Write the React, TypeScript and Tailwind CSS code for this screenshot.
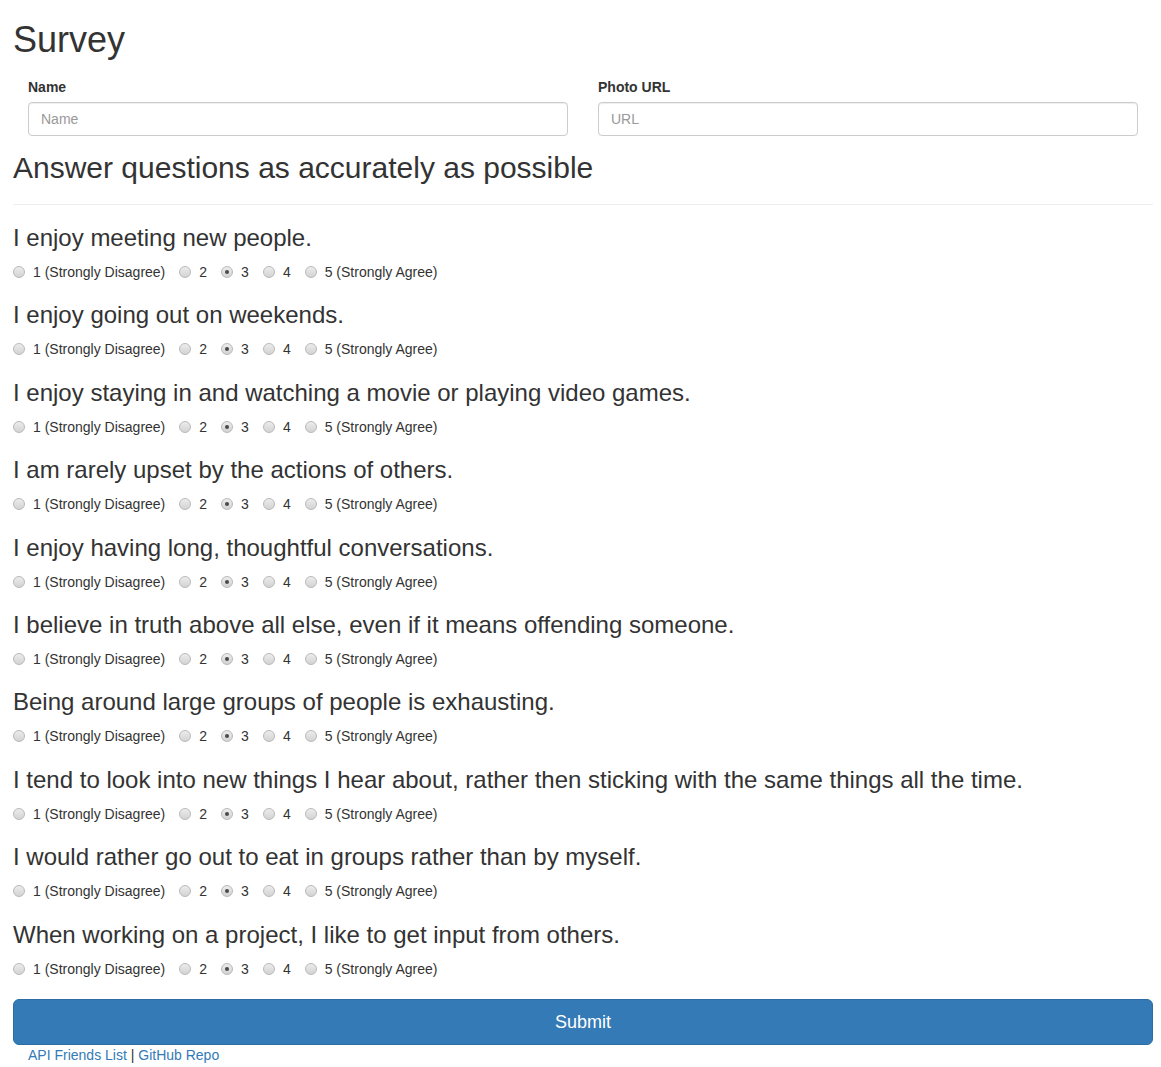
import React, { useState } from "react";

const questions = [
  "I enjoy meeting new people.",
  "I enjoy going out on weekends.",
  "I enjoy staying in and watching a movie or playing video games.",
  "I am rarely upset by the actions of others.",
  "I enjoy having long, thoughtful conversations.",
  "I believe in truth above all else, even if it means offending someone.",
  "Being around large groups of people is exhausting.",
  "I tend to look into new things I hear about, rather then sticking with the same things all the time.",
  "I would rather go out to eat in groups rather than by myself.",
  "When working on a project, I like to get input from others.",
];

const options = [
  { v: 1, label: "1 (Strongly Disagree)" },
  { v: 2, label: "2" },
  { v: 3, label: "3" },
  { v: 4, label: "4" },
  { v: 5, label: "5 (Strongly Agree)" },
];

function Radio({ checked, onClick, label }: { checked: boolean; onClick: () => void; label: string }) {
  return (
    <label className="flex items-center mr-[14px] cursor-pointer" onClick={onClick}>
      <span className="relative flex items-center justify-center w-[12px] h-[12px] rounded-full border border-[#b9b9b9] bg-gradient-to-b from-[#ececec] to-[#d3d3d3] mr-[8px]">
        {checked && <span className="w-[4px] h-[4px] rounded-full bg-[#4a4a4a]" />}
      </span>
      <span>{label}</span>
    </label>
  );
}

export default function App() {
  const [answers, setAnswers] = useState<number[]>(questions.map(() => 3));

  return (
    <div
      className="w-[1140px] ml-[13px] pt-[20px] text-[14px] leading-[20px] text-[#333333] bg-white"
      style={{ fontFamily: '"Liberation Sans", Arial, Helvetica, sans-serif' }}
    >
      <h1 className="text-[36px] leading-[40px] font-normal mb-[17px]">Survey</h1>

      <div className="grid grid-cols-2">
        <div className="px-[15px] mb-[15px]">
          <label className="block font-bold mb-[5px]">Name</label>
          <input
            type="text"
            placeholder="Name"
            className="block w-full h-[34px] px-[12px] border border-[#cccccc] rounded-[4px] shadow-[inset_0_1px_1px_rgba(0,0,0,0.075)] text-[14px] text-[#555] placeholder:text-[#999999] outline-none"
          />
        </div>
        <div className="px-[15px] mb-[15px]">
          <label className="block font-bold mb-[5px]">Photo URL</label>
          <input
            type="text"
            placeholder="URL"
            className="block w-full h-[34px] px-[12px] border border-[#cccccc] rounded-[4px] shadow-[inset_0_1px_1px_rgba(0,0,0,0.075)] text-[14px] text-[#555] placeholder:text-[#999999] outline-none"
          />
        </div>
      </div>

      <h2 className="text-[30px] leading-[33px] font-normal">Answer questions as accurately as possible</h2>
      <hr className="mt-[20px] mb-[20px] border-0 border-t border-[#eeeeee]" />

      {questions.map((q, qi) => (
        <div key={qi} className="mb-[20px]">
          <h3 className="text-[24px] leading-[26.4px] font-normal mb-[10px]">{q}</h3>
          <div className="flex items-center h-[21px]">
            {options.map((o) => (
              <Radio
                key={o.v}
                label={o.label}
                checked={answers[qi] === o.v}
                onClick={() => setAnswers((a) => a.map((x, i) => (i === qi ? o.v : x)))}
              />
            ))}
          </div>
        </div>
      ))}

      <button className="block w-full h-[46px] bg-[#337ab7] border border-[#2e6da4] rounded-[6px] text-white text-[18px] leading-[24px]">
        Submit
      </button>
      <div className="pl-[15px] h-[20px]">
        <a className="text-[#337ab7]" href="#">API Friends List</a>
        <span> | </span>
        <a className="text-[#337ab7]" href="#">GitHub Repo</a>
      </div>
    </div>
  );
}
